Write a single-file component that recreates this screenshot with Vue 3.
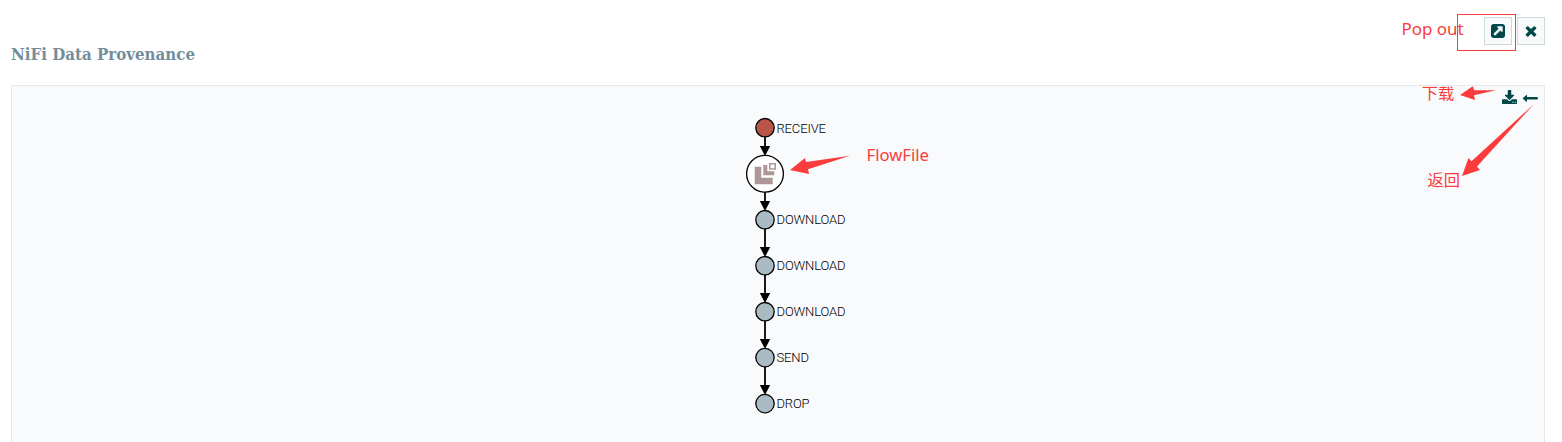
<script setup>
const events = [
  { label: 'RECEIVE', y: 127.7, base: 133, width: 49.5, fill: '#ba554a' },
  { label: 'DOWNLOAD', y: 219.7, base: 224, width: 69, fill: '#aabbc3' },
  { label: 'DOWNLOAD', y: 265.7, base: 270, width: 69, fill: '#aabbc3' },
  { label: 'DOWNLOAD', y: 311.7, base: 316, width: 69, fill: '#aabbc3' },
  { label: 'SEND', y: 357.6, base: 362, width: 32.5, fill: '#aabbc3' },
  { label: 'DROP', y: 403.6, base: 408, width: 33, fill: '#aabbc3' },
]
// Each link runs from the edge of one node to the edge of the next.
const links = [[137, 155.5], [192, 210.5], [229, 256.5], [275, 302.5], [321, 348.5], [367, 394.5]]
</script>

<template>
  <main class="page">
    <header class="header">
      <h1 class="title">
        <svg width="240" height="30"><text x="0" y="18" textLength="184" lengthAdjust="spacingAndGlyphs">NiFi Data Provenance</text></svg>
      </h1>
      <div class="actions">
        <button class="btn" aria-label="Pop out">
          <svg width="14" height="14" viewBox="0 128 1536 1536"><path d="M1280 928v-480q0-26-19-45t-45-19h-480q-42 0-59 39-17 41 14 70l144 144-534 534q-19 19-19 45t19 45l102 102q19 19 45 19t45-19l534-534 144 144q18 19 45 19 12 0 25-5 39-17 39-59zm256-512v960q0 119-84.500 203.500t-203.500 84.500h-960q-119 0-203.500-84.500t-84.500-203.500v-960q0-119 84.500-203.500t203.500-84.500h960q119 0 203.500 84.500t84.500 203.500z" /></svg>
        </button>
        <button class="btn" aria-label="Close">
          <svg width="16" height="16" viewBox="0 16 1792 1792"><path d="M1490 1322q0 40-28 68l-136 136q-28 28-68 28t-68-28l-294-294-294 294q-28 28-68 28t-68-28l-136-136q-28-28-28-68t28-68l294-294-294-294q-28-28-28-68t28-68l136-136q28-28 68-28t68 28l294 294 294-294q28-28 68-28t68 28l136 136q28 28 28 68t-28 68l-294 294 294 294q28 28 28 68z" /></svg>
        </button>
      </div>
    </header>

    <section class="lineage">
      <div class="tools">
        <svg width="15" height="14" viewBox="64 0 1664 1536" preserveAspectRatio="none"><path d="M1344 1344q0-26-19-45t-45-19-45 19-19 45 19 45 45 19 45-19 19-45zm256 0q0-26-19-45t-45-19-45 19-19 45 19 45 45 19 45-19 19-45zm128-224v320q0 40-28 68t-68 28h-1472q-40 0-68-28t-28-68v-320q0-40 28-68t68-28h465l135 136q58 56 136 56t136-56l136-136h464q40 0 68 28t28 68zm-325-569q17 41-14 70l-448 448q-18 19-45 19t-45-19l-448-448q-31-29-14-70 17-39 59-39h256v-448q0-26 19-45t45-19h256q26 0 45 19t19 45v448h256q42 0 59 39z" /></svg>
        <svg width="16" height="16" viewBox="0 0 16 16"><path d="M15.800 7.400v1.700q0 .3-.3.3H5v2.100q0 .5-.5.300L.7 8.600q-.2-.2 0-.4l3.800-3.300q.5-.2.500.3v1.900h10.500q.3 0 .3.300z" /></svg>
      </div>
    </section>

    <svg class="graph" width="1562" height="442" viewBox="0 0 1562 442">
      <g v-for="(l, i) in links" :key="'l' + i">
        <line x1="765" :y1="l[0]" x2="765" :y2="l[1] - 5" stroke="#000" stroke-width="1.8" />
        <path :d="`M759.800 ${l[1] - 9.500}h10.400l-5.200 10z`" />
      </g>
      <g v-for="(e, i) in events" :key="'e' + i">
        <circle cx="765" :cy="e.y" r="9.2" :fill="e.fill" stroke="#000" stroke-width="1.3" />
        <text class="event" x="776.500" :y="e.base" :textLength="e.width">{{ e.label }}</text>
      </g>
      <circle cx="765" cy="173.800" r="18.400" fill="#fff" stroke="#000" stroke-width="1.300" />
      <g fill="#ad9897">
        <path d="M754.700 166.700h6.600v11h11.400v6.500h-18z" />
        <path d="M763.300 165h4v6.200h7v4h-11z" />
        <path d="M769 163h7v6.700h-7zm1.500 1.500v3.700h4v-3.700z" fill-rule="evenodd" />
      </g>
    </svg>

    <svg class="notes" width="1562" height="442" viewBox="0 0 1562 442">
      <defs><clipPath id="panel"><rect x="1400" y="86.500" width="160" height="30" /></clipPath></defs>
      <rect x="1457.500" y="14.500" width="58" height="36" fill="none" stroke="#fa3c3c" />
      <text class="latin" x="1401.500" y="35" textLength="62" lengthAdjust="spacingAndGlyphs">Pop out</text>
      <text class="latin" x="866.500" y="161" textLength="62.500" lengthAdjust="spacingAndGlyphs">FlowFile</text>
      <g clip-path="url(#panel)">
        <text class="cjk" x="1421.800" y="99.400">下载</text>
        <path d="M1460 95L1473 86L1474 90.300L1496 90.300L1474 95.300L1475 100Z" />
      </g>
      <text class="cjk" x="1427.500" y="186.400">返回</text>
      <path d="M790 170L805 158L806 162L850 155.700L808 169.300L809 174Z" />
      <path d="M1462 176L1468.500 158L1471.500 161.300L1534 104L1477 166.500L1480 170Z" />
    </svg>
  </main>
</template>

<style>
body { background: #fff; overflow: hidden; }
</style>

<style scoped>
.page {
  position: relative;
  box-sizing: border-box;
  display: flex;
  flex-direction: column;
  width: 1562px;
  height: 442px;
  padding: 0 17px 0 11px;
  overflow: hidden;
  font-family: Roboto, "Liberation Sans", sans-serif;
}
.header { display: flex; justify-content: space-between; height: 85px; flex: none; }
.title { margin: 42px 0 0; height: 30px; line-height: 0; }
.title svg { display: block; overflow: visible; }
.title text { font: bold 17.5px "Roboto Slab", "DejaVu Serif", serif; fill: #728e9b; }
.actions { display: flex; gap: 5px; padding-top: 17px; }
.btn {
  box-sizing: border-box;
  display: flex;
  align-items: center;
  justify-content: center;
  width: 28px;
  height: 28px;
  padding: 0;
  border: 1px solid #ccdadb;
  background: #f9fafb;
}
.btn svg, .tools svg { fill: #004849; display: block; }
.lineage { flex: 1; border: 1px solid #e3e8eb; border-bottom: 0; background: #f9fafc; }
.tools { display: flex; justify-content: flex-end; gap: 5px; padding: 4px 6px 0 0; }
.graph, .notes { position: absolute; left: 0; top: 0; pointer-events: none; }
.event { font: 300 13px Roboto, sans-serif; fill: #000; }
.notes text, .notes path { fill: #fa3c3c; }
.latin { font: 17px "Noto Sans", "Open Sans", sans-serif; }
.cjk { font: 400 16.300px "Noto Sans CJK SC", sans-serif; }
</style>
